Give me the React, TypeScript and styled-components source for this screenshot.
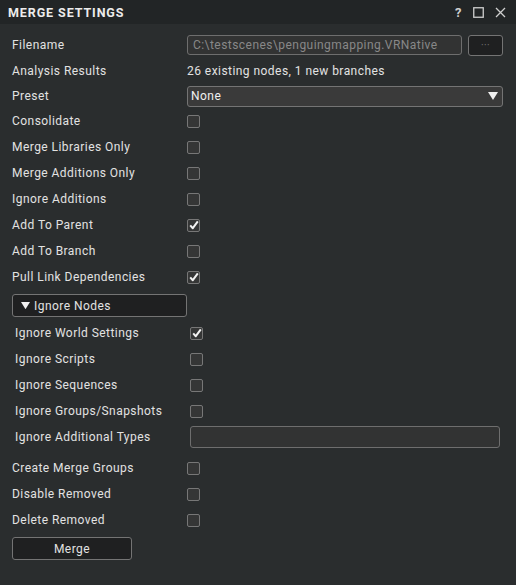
import React, { useState } from "react";
import styled, { createGlobalStyle } from "styled-components";

const GlobalStyle = createGlobalStyle`
  html, body {
    margin: 0;
    padding: 0;
    background: #2a2d2e;
  }
  * {
    box-sizing: border-box;
  }
`;

const Window = styled.div`
  width: 516px;
  height: 585px;
  background-color: #2a2d2e;
  font-family: Roboto, "Noto Sans", sans-serif;
  font-size: 12px;
  letter-spacing: 0.45px;
  color: #e2e2e2;
  overflow: hidden;
`;

const TitleBar = styled.div`
  height: 24px;
  display: flex;
  align-items: center;
  justify-content: space-between;
  padding: 0 10px 0 8px;
  background-color: #222526;
`;

const Title = styled.span`
  font-family: Roboto, "Liberation Sans", sans-serif;
  font-weight: 700;
  font-size: 12.5px;
  letter-spacing: 0.9px;
  color: #ececec;
`;

const TitleIcons = styled.div`
  display: flex;
  align-items: center;
  gap: 11px;
  color: #cfcfcf;

  span {
    font-weight: 700;
    font-size: 13px;
  }
`;

const Body = styled.div`
  padding: 8px 13px 0 12px;
  display: flex;
  flex-direction: column;
`;

const Row = styled.div<{ $h?: number; $indent?: number }>`
  display: grid;
  grid-template-columns: 175px 1fr;
  align-items: center;
  height: ${(p) => p.$h || 26}px;
  padding-left: ${(p) => p.$indent || 0}px;
  padding-right: ${(p) => p.$indent || 0}px;
`;

const Label = styled.span`
  white-space: nowrap;
`;

const FileField = styled.div`
  display: flex;
  gap: 6px;
`;

const TextBox = styled.div<{ $h?: number }>`
  flex: 1;
  height: ${(p) => p.$h || 20}px;
  border: 1px solid #6e6e6e;
  border-radius: 3px;
  background-color: #323333;
  color: #888;
  padding: 0 5px;
  display: flex;
  align-items: center;
  white-space: nowrap;
  overflow: hidden;
`;

const DarkButton = styled.button<{ $w?: number }>`
  width: ${(p) => (p.$w ? `${p.$w}px` : "auto")};
  height: 23px;
  background-color: #1f2021;
  border: 1px solid #747474;
  border-radius: 3px;
  color: #e2e2e2;
  font-family: inherit;
  font-size: 12px;
  letter-spacing: 0.45px;
  padding: 0;
  cursor: pointer;
`;

const DotsButton = styled(DarkButton)`
  width: 35px;
  height: 21px;
  color: #777;
  font-size: 10px;
`;

const Select = styled.div`
  height: 21px;
  border: 1px solid #747474;
  border-radius: 3px;
  background-color: #3a3a3a;
  color: #f0f0f0;
  display: flex;
  align-items: center;
  justify-content: space-between;
  padding: 0 4px 0 3px;
`;

const Box = styled.div<{ $on: boolean }>`
  width: 13px;
  height: 13px;
  border: 1px solid #777;
  border-radius: 2px;
  background-color: #353636;
  display: flex;
  align-items: center;
  justify-content: center;
  cursor: pointer;
`;

const GroupButton = styled(DarkButton)`
  width: 175px;
  margin-top: 4px;
  display: flex;
  align-items: center;
  gap: 4px;
  padding-left: 8px;
  text-align: left;
`;

const MergeButton = styled(DarkButton)`
  width: 120px;
  margin-top: 4px;
  padding-top: 1px;
`;

const Spacer = styled.div<{ $h: number }>`
  height: ${(p) => p.$h}px;
`;

const Check = ({ on, onToggle }: { on: boolean; onToggle: () => void }) => (
  <Box $on={on} onClick={onToggle}>
    {on && (
      <svg width="10" height="10" viewBox="0 0 10 10">
        <path d="M1.2 5.4 L3.8 8.2 L8.8 1.4" stroke="#f2f2f2" strokeWidth="2" fill="none" strokeLinejoin="round" />
      </svg>
    )}
  </Box>
);

const Triangle = ({ size = 9 }: { size?: number }) => (
  <svg width={size} height={size * 0.8} viewBox="0 0 10 8">
    <path d="M0 0 L10 0 L5 8 Z" fill="#f0f0f0" />
  </svg>
);

const mainOptions = [
  "Consolidate",
  "Merge Libraries Only",
  "Merge Additions Only",
  "Ignore Additions",
  "Add To Parent",
  "Add To Branch",
  "Pull Link Dependencies",
];

const ignoreOptions = ["Ignore World Settings", "Ignore Scripts", "Ignore Sequences", "Ignore Groups/Snapshots"];

const tailOptions = ["Create Merge Groups", "Disable Removed", "Delete Removed"];

const App: React.FC = () => {
  const [checked, setChecked] = useState<Record<string, boolean>>({
    "Add To Parent": true,
    "Pull Link Dependencies": true,
    "Ignore World Settings": true,
  });

  const toggle = (key: string) => setChecked((c) => ({ ...c, [key]: !c[key] }));

  return (
    <Window>
      <GlobalStyle />
      <TitleBar>
        <Title>MERGE SETTINGS</Title>
        <TitleIcons>
          <span>?</span>
          <svg width="11" height="11" viewBox="0 0 11 11">
            <rect x="0.75" y="0.75" width="9.5" height="9.5" stroke="#cfcfcf" strokeWidth="1.3" fill="none" />
          </svg>
          <svg width="11" height="11" viewBox="0 0 11 11">
            <path d="M1 1 L10 10 M10 1 L1 10" stroke="#cfcfcf" strokeWidth="1.3" />
          </svg>
        </TitleIcons>
      </TitleBar>

      <Body>
        <Row>
          <Label>Filename</Label>
          <FileField>
            <TextBox>C:\testscenes\penguingmapping.VRNative</TextBox>
            <DotsButton>···</DotsButton>
          </FileField>
        </Row>
        <Row>
          <Label>Analysis Results</Label>
          <span>26 existing nodes, 1 new branches</span>
        </Row>
        <Row $h={24}>
          <Label>Preset</Label>
          <Select>
            <span>None</span>
            <Triangle size={10} />
          </Select>
        </Row>

        {mainOptions.map((o) => (
          <Row key={o}>
            <Label>{o}</Label>
            <Check on={!!checked[o]} onToggle={() => toggle(o)} />
          </Row>
        ))}

        <GroupButton>
          <Triangle size={9} />
          <span>Ignore Nodes</span>
        </GroupButton>

        <Spacer $h={3} />
        {ignoreOptions.map((o) => (
          <Row key={o} $indent={3}>
            <Label>{o}</Label>
            <Check on={!!checked[o]} onToggle={() => toggle(o)} />
          </Row>
        ))}
        <Row $indent={3}>
          <Label>Ignore Additional Types</Label>
          <TextBox $h={22} />
        </Row>

        <Spacer $h={5} />
        {tailOptions.map((o) => (
          <Row key={o}>
            <Label>{o}</Label>
            <Check on={!!checked[o]} onToggle={() => toggle(o)} />
          </Row>
        ))}

        <MergeButton>Merge</MergeButton>
      </Body>
    </Window>
  );
};

export default App;
